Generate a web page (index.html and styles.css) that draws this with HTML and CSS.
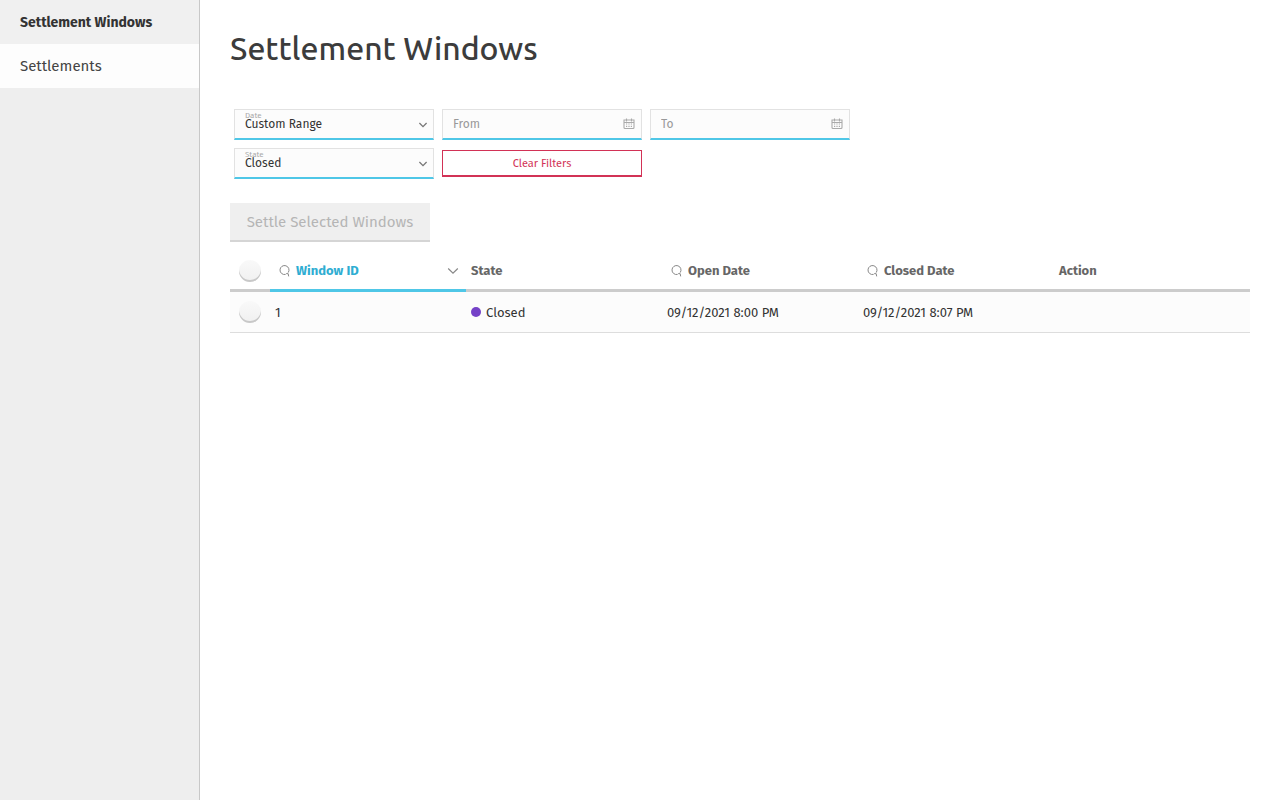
FILE: index.html
```html
<!DOCTYPE html>
<html lang="en">
<head>
<meta charset="utf-8">
<meta name="viewport" content="width=device-width, initial-scale=1">
<title>Settlement Windows</title>
<link rel="stylesheet" href="styles.css">
</head>
<body>
<svg class="symbols" aria-hidden="true">
  <symbol id="chevron" viewBox="0 0 10 10"><path d="M1.4 3l3.6 3.6L8.6 3" fill="none" stroke="currentColor" stroke-width="1.3"/></symbol>
  <symbol id="sort" viewBox="0 0 12 12"><path d="M1.2 3.5l4.8 4.6 4.8-4.6" fill="none" stroke="currentColor" stroke-width="1.2"/></symbol>
  <symbol id="search" viewBox="0 0 12 12"><path d="M6.6 9.4A4.5 4.5 0 1 1 9.2 7.6M7.2 8.6L9.2 8.7L9.7 11.4" fill="none" stroke="currentColor" stroke-width="1"/></symbol>
  <symbol id="calendar" viewBox="0 0 12 12"><path d="M1 2h10v7.5q0 1-1 1H2q-1 0-1-1zM1 4.5h10M3.5 0.5v3M8.5 0.5v3" fill="none" stroke="currentColor" stroke-width="1.1"/><path d="M3 6h1.2M5.4 6h1.2M7.8 6H9M3 8.3h1.2M5.4 8.3h1.2M7.8 8.3H9" stroke="currentColor" stroke-width="1.2"/></symbol>
</svg>
<div class="layout">
  <nav class="sidebar">
    <a class="nav-link nav-link-active" href="#windows" aria-current="page">Settlement Windows</a>
    <a class="nav-link" href="#settlements">Settlements</a>
  </nav>
  <main class="content">
    <h1 class="title">Settlement Windows</h1>
    <form class="filters">
      <div class="filter-row">
        <div class="field">
          <label class="field-label" for="date">Date</label>
          <select class="control" id="date"><option>Custom Range</option></select>
          <svg class="field-icon chevron"><use href="#chevron"/></svg>
        </div>
        <div class="field">
          <input class="control" type="text" placeholder="From" aria-label="From">
          <svg class="field-icon calendar"><use href="#calendar"/></svg>
        </div>
        <div class="field">
          <input class="control" type="text" placeholder="To" aria-label="To">
          <svg class="field-icon calendar"><use href="#calendar"/></svg>
        </div>
      </div>
      <div class="filter-row">
        <div class="field">
          <label class="field-label" for="state">State</label>
          <select class="control" id="state"><option>Closed</option></select>
          <svg class="field-icon chevron"><use href="#chevron"/></svg>
        </div>
        <button class="clear" type="button">Clear Filters</button>
      </div>
    </form>
    <button class="settle" type="button" disabled>Settle Selected Windows</button>
    <table class="table">
      <thead>
        <tr>
          <th class="select-cell"><input class="check" type="checkbox" aria-label="Select all windows"></th>
          <th class="sorted" aria-sort="descending"><div class="heading"><svg class="search"><use href="#search"/></svg>Window ID<svg class="sort"><use href="#sort"/></svg></div></th>
          <th>State</th>
          <th><div class="heading"><svg class="search"><use href="#search"/></svg>Open Date</div></th>
          <th><div class="heading"><svg class="search"><use href="#search"/></svg>Closed Date</div></th>
          <th>Action</th>
        </tr>
      </thead>
      <tbody>
        <tr>
          <td class="select-cell"><input class="check" type="checkbox" aria-label="Select window 1"></td>
          <td>1</td>
          <td><div class="status"><span class="dot"></span>Closed</div></td>
          <td>09/12/2021 8:00 PM</td>
          <td>09/12/2021 8:07 PM</td>
          <td></td>
        </tr>
      </tbody>
    </table>
  </main>
</div>
</body>
</html>
```
FILE: styles.css
```css
* { box-sizing: border-box; }

body {
  margin: 0;
  background: #fff;
  color: #333;
  font-family: "Fira Sans", "Noto Sans", sans-serif;
  font-size: 13px;
}

button, input, select { font-family: inherit; margin: 0; }

.symbols { display: none; }

.layout { display: flex; min-height: 100vh; }

.sidebar {
  flex: 0 0 200px;
  background: #eee;
  border-right: 1px solid #c8c8c8;
}

.nav-link {
  display: block;
  padding: 0 20px;
  background: #fdfdfd;
  color: #444;
  font-size: 15px;
  line-height: 44px;
  text-decoration: none;
  white-space: nowrap;
}

.nav-link-active {
  padding-top: 2px;
  background: #f0f0f0;
  color: #333;
  font-size: 14px;
  font-weight: 700;
  line-height: 42px;
}

.content { flex: 1; min-width: 0; padding: 28px 30px; }

.title {
  margin: 0 0 41px;
  color: #3c3c3c;
  font-family: Ubuntu, "Noto Sans", sans-serif;
  font-size: 32px;
  font-weight: 500;
  line-height: 40px;
}

.filters {
  display: flex;
  flex-direction: column;
  gap: 8px;
  padding: 0 4px;
  margin-bottom: 24px;
}

.filter-row { display: flex; flex-wrap: wrap; align-items: center; gap: 8px; }

.field { position: relative; width: 200px; }

.field-label {
  position: absolute;
  top: 2px;
  left: 11px;
  color: #aaa;
  font-size: 8px;
  line-height: 9px;
}

.control {
  display: block;
  width: 100%;
  height: 31px;
  padding: 0 30px 0 10px;
  appearance: none;
  background: #fcfcfc;
  border: 1px solid #e2e2e2;
  border-bottom: 2px solid #4fc7e7;
  border-radius: 0;
  color: #333;
  font-size: 12px;
}

.control::placeholder { color: #999; opacity: 1; }

.field-icon { position: absolute; right: 6px; top: 11px; }
.chevron { width: 10px; height: 10px; color: #777; }
.calendar { right: 7px; top: 9px; width: 12px; height: 12px; color: #aaa; }

.clear {
  width: 200px;
  height: 27px;
  padding: 0;
  background: #fff;
  border: 1px solid #d23256;
  border-bottom-width: 2px;
  color: #d23256;
  font-size: 11px;
}

.settle {
  display: block;
  min-width: 200px;
  height: 39px;
  padding: 0 10px;
  margin-bottom: 10px;
  background: #efefef;
  border: 0;
  border-bottom: 2px solid #d5d5d5;
  color: #b5b5b5;
  font-size: 15px;
}

.table {
  width: 100%;
  table-layout: fixed;
  border-collapse: separate;
  border-spacing: 0;
}

.table th, .table td { padding: 0 5px; text-align: left; white-space: nowrap; }
.table th {
  height: 40px;
  border-bottom: 3px solid #ccc;
  color: #666;
  font-size: 13px;
  font-weight: 700;
}
.table td {
  height: 41px;
  background: #fcfcfc;
  border-bottom: 1px solid #ddd;
  color: #333;
  font-size: 13px;
}
.table .sorted { border-bottom-color: #4fc7e7; color: #2fadd2; }
.table .select-cell { width: 40px; padding: 0 9px; }

.heading { display: flex; align-items: center; gap: 5px; padding-left: 4px; }
.search { width: 12px; height: 12px; color: #888; }
.sort { width: 12px; height: 12px; margin-left: auto; margin-right: 2px; color: #888; }

.check {
  display: block;
  width: 22px;
  height: 22px;
  appearance: none;
  background: linear-gradient(#f9f9f9, #f0f0f0);
  border-radius: 50%;
  box-shadow: inset 0 -2px 0 #c8c8c8;
}

.status { display: flex; align-items: center; gap: 5px; }
.dot { width: 10px; height: 10px; border-radius: 50%; background: #7542c8; }
```
